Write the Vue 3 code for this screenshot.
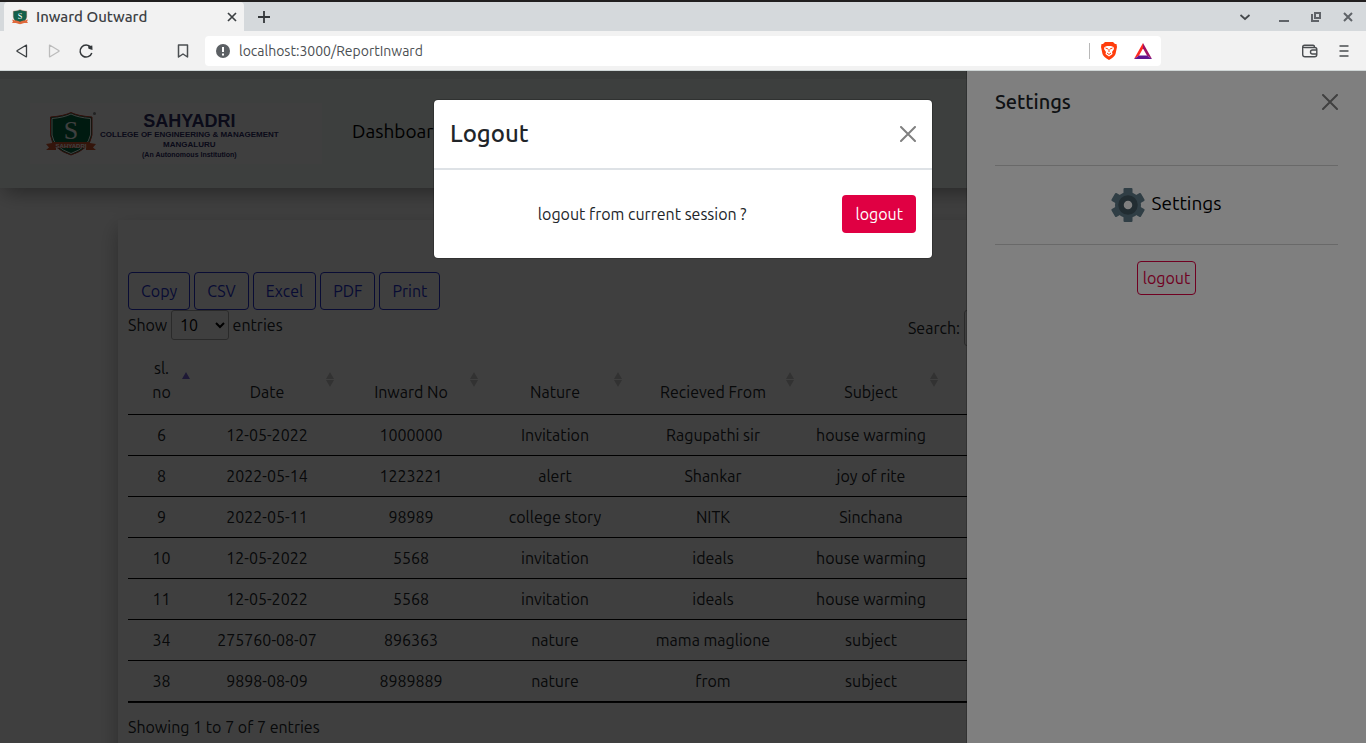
<script setup>
import { ref } from 'vue'

const exportButtons = ['Copy', 'CSV', 'Excel', 'PDF', 'Print']
const columns = ['sl. no', 'Date', 'Inward No', 'Nature', 'Recieved From', 'Subject']
const rows = [
  ['6', '12-05-2022', '1000000', 'Invitation', 'Ragupathi sir', 'house warming'],
  ['8', '2022-05-14', '1223221', 'alert', 'Shankar', 'joy of rite'],
  ['9', '2022-05-11', '98989', 'college story', 'NITK', 'Sinchana'],
  ['10', '12-05-2022', '5568', 'invitation', 'ideals', 'house warming'],
  ['11', '12-05-2022', '5568', 'invitation', 'ideals', 'house warming'],
  ['34', '275760-08-07', '896363', 'nature', 'mama maglione', 'subject'],
  ['38', '9898-08-09', '8989889', 'nature', 'from', 'subject'],
]
const pageSize = ref('10')
const search = ref('')
const address = ref('localhost:3000/ReportInward')
</script>

<template>
  <div class="window">
    <header class="chrome">
      <div class="tabstrip">
        <div class="tab">
          <svg class="favicon" width="16" height="16" viewBox="0 0 50 46">
            <path d="M4 5Q17 4 25 0Q33 4 46 5V23Q44 37 25 44Q6 37 4 23Z" fill="#14604a" stroke="#b5523a" stroke-width="1" />
            <path d="M0 31L10 34H40L50 31L47 37L50 42H38L25 46L12 42H0L3 37Z" fill="#e0693c" />
            <path d="M10 8V24Q13 35 25 38Q37 35 40 24V8L25 5Z" fill="#14604a" />
            <text x="25" y="30" text-anchor="middle" class="crest-letter">S</text>
          </svg>
          <span class="tab-title">Inward Outward</span>
          <button class="icon-btn" aria-label="Close tab">
            <svg width="10" height="10" viewBox="0 0 10 10"><path d="M1 1L9 9M9 1L1 9" stroke="#3c4043" stroke-width="1.7" /></svg>
          </button>
        </div>
        <button class="icon-btn new-tab" aria-label="New tab">
          <svg width="12" height="12" viewBox="0 0 12 12"><path d="M6 0V12M0 6H12" stroke="#33373a" stroke-width="1.8" /></svg>
        </button>
        <div class="window-controls">
          <button class="icon-btn" aria-label="Search tabs">
            <svg width="12" height="12" viewBox="0 0 12 12"><path d="M1.5 4L6 8L10.500 4" fill="none" stroke="#44484b" stroke-width="1.7" /></svg>
          </button>
          <button class="icon-btn" aria-label="Minimize">
            <svg width="12" height="12" viewBox="0 0 12 12"><path d="M1 10H11" stroke="#5f6368" stroke-width="2" /></svg>
          </button>
          <button class="icon-btn" aria-label="Restore">
            <svg width="12" height="12" viewBox="0 0 12 12"><path d="M5 2H10V7H5ZM2 3V10H9" fill="none" stroke="#5f6368" stroke-width="2" /></svg>
          </button>
          <button class="icon-btn" aria-label="Close window">
            <svg width="12" height="12" viewBox="0 0 12 12"><path d="M2 2L10 10M10 2L2 10" stroke="#5f6368" stroke-width="2" /></svg>
          </button>
        </div>
      </div>
      <div class="toolbar">
        <div class="nav-buttons">
          <button class="icon-btn" aria-label="Back">
            <svg width="16" height="16" viewBox="0 0 16 16"><path d="M12.500 2.500V13.500Q12.500 14 12 13.700L3.300 8.500Q2.500 8 3.300 7.500L12 2.300Q12.500 2 12.500 2.500Z" fill="none" stroke="#3c4043" stroke-width="1.3" /></svg>
          </button>
          <button class="icon-btn" aria-label="Forward">
            <svg width="16" height="16" viewBox="0 0 16 16"><path d="M3.500 2.500V13.500Q3.500 14 4 13.700L12.700 8.500Q13.500 8 12.700 7.500L4 2.300Q3.500 2 3.500 2.500Z" fill="none" stroke="#bcbcbc" stroke-width="1.3" /></svg>
          </button>
          <button class="icon-btn" aria-label="Reload">
            <svg width="16" height="16" viewBox="0 0 16 16"><path d="M12.800 4.300A6 6 0 1 0 13.800 10" fill="none" stroke="#33373a" stroke-width="1.500" /><path d="M10 3.200L14.300 2.500L14.500 7L10.500 5.800Z" fill="#33373a" /></svg>
          </button>
          <button class="icon-btn bookmark" aria-label="Bookmark">
            <svg width="16" height="16" viewBox="0 0 16 16"><path d="M3.500 2H12.500V14L8 11L3.500 14Z" fill="none" stroke="#4b4f52" stroke-width="1.500" stroke-linejoin="round" /></svg>
          </button>
        </div>
        <div class="address">
          <svg width="14" height="14" viewBox="0 0 14 14"><circle cx="7" cy="7" r="7" fill="#5c6064" /><path d="M7 3V8M7 9.500V11.500" stroke="#fff" stroke-width="2" /></svg>
          <input v-model="address" type="text" aria-label="Address" />
          <span class="divider"></span>
          <button class="icon-btn" aria-label="Shields">
            <svg width="18" height="20" viewBox="0 0 18 20">
              <path d="M5 1H13L15 3L16.500 3L17 6L15.500 13Q14.500 16 9 19Q3.500 16 2.500 13L1 6L1.500 3L3 3Z" fill="#ff3d0c" />
              <path d="M4.500 6L7 5H11L13.500 6L14 8L12 11L12.500 13L9 15.500L5.500 13L6 11L4 8Z" fill="#fff" />
              <path d="M5.500 7L8 8M12.500 7L10 8M9 8V11M7 12L9 13.500L11 12" fill="none" stroke="#ff3d0c" stroke-width="1" />
            </svg>
          </button>
          <button class="icon-btn rewards" aria-label="Rewards">
            <svg width="18" height="16" viewBox="0 0 18 16">
              <path d="M9 0L0 16L5 12.500L9 5.500Z" fill="#ff2a1f" />
              <path d="M9 0L18 16L13 12.500L9 5.500Z" fill="#9e1165" />
              <path d="M0 16H18L13 12.500H5Z" fill="#5f1291" />
            </svg>
          </button>
        </div>
        <div class="menu-buttons">
          <button class="icon-btn" aria-label="Wallet">
            <svg width="18" height="14" viewBox="0 0 18 14"><path d="M13.500 3.500V3Q13.500 1.200 12 1.200H3.500Q1.700 1.200 1.700 3V10.500Q1.700 12.800 4 12.800H13.500Q15.800 12.800 15.800 10.500V5.500Q15.800 3.500 13.800 3.500H3.500Q1.700 3.500 1.700 2.800M15.800 6H11.500Q9.500 6 9.500 8Q9.500 10 11.500 10H15.800" fill="none" stroke="#4a4d50" stroke-width="1.400" /></svg>
          </button>
          <button class="icon-btn" aria-label="Menu">
            <svg width="12" height="12" viewBox="0 0 12 12"><path d="M1.500 1H10.500M1.500 6H10.500M1.500 11H10.500" stroke="#4a4d50" stroke-width="1.500" /></svg>
          </button>
        </div>
      </div>
    </header>

    <main class="viewport">
      <nav class="site-nav">
        <div class="brand">
          <svg width="52" height="46" viewBox="0 0 52 46">
            <path d="M4.500 6Q18 5 25 1.500Q32 5 46 6V24Q44 38 25 44Q6 38 4.500 24Z" fill="#006b40" stroke="#c63b2c" stroke-width="1" />
            <path d="M6 7.500Q18 6.500 25 3Q32 6.500 44.500 7.500V24Q42 36.500 25 42.500Q8 36.500 6 24Z" fill="none" stroke="#fff" stroke-width="1" />
            <path d="M0 33L6 32V31H44V32L50 33L47 36.500L50 39H40V37H10V39H0L3 36.500Z" fill="#d2562f" />
            <text x="25" y="28" text-anchor="middle" class="crest-letter">S</text>
            <text x="25" y="36.500" text-anchor="middle" class="crest-name">SAHYADRI</text>
            <circle cx="48.500" cy="2.500" r="1.500" fill="#888" />
          </svg>
          <div class="brand-text">
            <strong class="brand-name">SAHYADRI</strong>
            <span>COLLEGE OF ENGINEERING &amp; MANAGEMENT</span>
            <span>MANGALURU</span>
            <span class="brand-note">(An Autonomous Institution)</span>
          </div>
        </div>
        <a class="nav-link" href="#">Dashboard</a>
      </nav>

      <section class="card">
        <div class="exports">
          <button v-for="label in exportButtons" :key="label" class="export-btn">{{ label }}</button>
        </div>
        <div class="controls">
          <label class="length">Show
            <select v-model="pageSize"><option>10</option><option>25</option></select>
            entries</label>
          <label class="filter">Search: <input v-model="search" type="search" /></label>
        </div>
        <table>
          <colgroup>
            <col class="c-id" /><col class="c-mid" /><col class="c-mid" /><col class="c-mid" /><col class="c-wide" /><col class="c-mid" /><col />
          </colgroup>
          <thead>
            <tr>
              <th v-for="(name, i) in columns" :key="name" scope="col">
                {{ name }}
                <svg class="sort" width="8" height="15" viewBox="0 0 8 15">
                  <path d="M4 0L8 7H0Z" :class="i === 0 ? 'active' : 'idle'" />
                  <path v-if="i > 0" d="M0 8H8L4 15Z" class="idle" />
                </svg>
              </th>
              <td></td>
            </tr>
          </thead>
          <tbody>
            <tr v-for="row in rows" :key="row[0]">
              <td v-for="(cell, i) in row" :key="i">{{ cell }}</td>
              <td></td>
            </tr>
          </tbody>
        </table>
        <p class="info">Showing 1 to 7 of 7 entries</p>
      </section>

      <div class="backdrop"></div>

      <aside class="offcanvas">
        <div class="offcanvas-head">
          <h5>Settings</h5>
          <button class="icon-btn" aria-label="Close settings">
            <svg width="16" height="16" viewBox="0 0 16 16"><path d="M1 1L15 15M15 1L1 15" stroke="#808080" stroke-width="2" stroke-linecap="round" /></svg>
          </button>
        </div>
        <hr />
        <a class="settings-link" href="#">
          <svg width="34" height="34" viewBox="0 0 34 34">
            <g fill="#607d8b">
              <circle cx="17" cy="17" r="13" />
              <rect x="12.500" y="0" width="9" height="34" rx="1" />
              <rect x="12.500" y="0" width="9" height="34" rx="1" transform="rotate(60 17 17)" />
              <rect x="12.500" y="0" width="9" height="34" rx="1" transform="rotate(120 17 17)" />
            </g>
            <circle cx="17" cy="17" r="7" fill="#fff" stroke="#455a64" stroke-width="5.500" />
          </svg>
          <span>Settings</span>
        </a>
        <hr />
        <button class="outline-logout">logout</button>
      </aside>

      <div class="backdrop"></div>

      <div class="modal" role="dialog" aria-labelledby="logout-title">
        <div class="modal-head">
          <h4 id="logout-title">Logout</h4>
          <button class="icon-btn" aria-label="Close dialog">
            <svg width="16" height="16" viewBox="0 0 16 16"><path d="M1 1L15 15M15 1L1 15" stroke="#808080" stroke-width="2" stroke-linecap="round" /></svg>
          </button>
        </div>
        <div class="modal-body">
          <p>logout from current session ?</p>
          <button class="solid-logout">logout</button>
        </div>
      </div>
    </main>
  </div>
</template>

<style>
body {
  margin: 0;
  overflow: hidden;
}
</style>

<style scoped>
* {
  box-sizing: border-box;
}
.window {
  display: flex;
  flex-direction: column;
  height: 100vh;
  font-family: Ubuntu, "Noto Sans", "Open Sans", sans-serif;
  font-size: 16px;
  line-height: 24px;
  color: #212529;
}
button, input, select {
  font: inherit;
}
svg {
  display: block;
  flex: none;
}
.icon-btn {
  display: flex;
  padding: 0;
  border: 0;
  background: none;
}

/* browser chrome */
.chrome {
  border-top: 2px solid #211f1f;
  border-bottom: 1px solid #cfd6d6;
  background: #f2f2f2;
}
.tabstrip {
  display: flex;
  align-items: center;
  height: 29px;
  padding-left: 4px;
  background: #d5d9dc;
}
.tab {
  display: flex;
  align-items: center;
  gap: 8px;
  width: 240px;
  height: 29px;
  padding: 0 7px 0 8px;
  border-radius: 4px 4px 0 0;
  background: #f2f2f2;
  color: #3c4043;
}
.tab-title {
  flex: 1;
  font-size: 15px;
  font-weight: 500;
}
.new-tab {
  margin-left: 14px;
}
.window-controls {
  display: flex;
  gap: 20px;
  margin-left: auto;
  padding-right: 12px;
}
.window-controls .icon-btn:first-child {
  margin-right: 7px;
}
.toolbar {
  display: flex;
  align-items: center;
  height: 39px;
}
.nav-buttons {
  display: flex;
  gap: 16px;
  width: 205px;
  padding: 0 14px;
}
.bookmark {
  margin-left: auto;
}
.address {
  display: flex;
  flex: 1;
  align-items: center;
  height: 30px;
  padding: 0 9px 0 11px;
  border-radius: 4px;
  background: #fff;
}
.address input {
  flex: 1;
  min-width: 0;
  padding: 0 9px;
  border: 0;
  outline: 0;
  background: none;
  color: #4b4f53;
  font-size: 14px;
}
.divider {
  width: 1px;
  height: 16px;
  margin-right: 10px;
  background: #b8b8b8;
}
.rewards {
  margin-left: 16px;
}
.menu-buttons {
  display: flex;
  align-items: center;
  justify-content: flex-end;
  gap: 19px;
  width: 205px;
  padding-right: 16px;
}

/* page */
.viewport {
  position: relative;
  flex: 1;
  min-height: 0;
  overflow: hidden;
  background: #fff;
}
.site-nav {
  display: flex;
  align-items: center;
  padding: 24px 30px;
  border-top: 8px solid #e4eee9;
  background: mintcream;
  box-shadow: 4px 4px 20px rgba(0, 0, 0, 0.4);
}
.brand {
  display: flex;
  align-items: center;
  gap: 2px;
  width: 292px;
  height: 61px;
  padding-left: 16px;
  background: #fff;
}
.brand-text {
  display: flex;
  flex-direction: column;
  align-items: center;
  padding-top: 4px;
  color: #2c2c66;
  font-family: "Liberation Sans", Arial, sans-serif;
  font-size: 8px;
  font-weight: 700;
  line-height: 10px;
  white-space: nowrap;
}
.brand-name {
  font-size: 18px;
  line-height: 18px;
}
.brand-note {
  font-size: 7px;
}
.crest-letter {
  fill: #fff;
  font-family: "Liberation Serif", serif;
  font-size: 26px;
}
.crest-name {
  fill: #fff;
  font-family: "Liberation Sans", sans-serif;
  font-size: 6px;
  font-weight: 700;
}
.nav-link {
  margin: 0 0 6px 30px;
  color: #000;
  font-size: 19px;
  text-decoration: none;
}
.card {
  margin: 32px 118px 0;
  padding: 52px 10px 24px;
  background: #fff;
  box-shadow: 0 8px 20px rgba(0, 0, 0, 0.3);
}
.exports {
  display: flex;
  gap: 4px;
}
.export-btn {
  padding: 6px 12px;
  border: 1px solid #2431d0;
  border-radius: 4px;
  background: none;
  color: #2431d0;
}
.controls {
  display: flex;
  justify-content: space-between;
  height: 36px;
}
.length select {
  width: 58px;
  height: 30px;
  padding: 0 4px;
  border: 1px solid #aaa;
  border-radius: 3px;
  background: transparent;
}
.filter {
  display: flex;
  gap: 4px;
  align-items: center;
}
.filter input {
  width: 274px;
  height: 36px;
  border: 1px solid #aaa;
  border-radius: 3px;
}
table {
  width: 100%;
  table-layout: fixed;
  border-collapse: separate;
  border-spacing: 0;
  border-bottom: 1px solid #111;
}
.c-id {
  width: 67px;
}
.c-mid {
  width: 144px;
}
.c-wide {
  width: 172px;
}
th, td {
  padding: 8px 10px;
  border-bottom: 1px solid #000;
  font-weight: 400;
  text-align: center;
}
thead th {
  position: relative;
  padding: 10px 18px;
  vertical-align: bottom;
}
.sort {
  position: absolute;
  top: 26px;
  right: 5px;
}
.idle {
  fill: #c8c8c8;
}
.active {
  fill: #7a66d8;
}
.info {
  margin: 12px 0 0;
}
.backdrop {
  position: absolute;
  inset: 0;
  background: rgba(0, 0, 0, 0.5);
}

/* settings drawer */
.offcanvas {
  position: absolute;
  top: 0;
  right: 0;
  bottom: 0;
  width: 400px;
  padding: 16px 28px;
  border-left: 1px solid rgba(0, 0, 0, 0.2);
  background: #fff;
  background-clip: padding-box;
  text-align: center;
}
.offcanvas-head {
  display: flex;
  align-items: center;
  justify-content: space-between;
  height: 30px;
  margin-bottom: 48px;
}
h5, h4 {
  margin: 0;
  font-weight: 500;
}
h5 {
  font-size: 20px;
}
hr {
  height: 1px;
  margin: 0;
  border: 0;
  background: #d3d3d3;
}
.settings-link {
  display: flex;
  align-items: center;
  justify-content: center;
  gap: 6px;
  height: 78px;
  color: #000;
  font-size: 19px;
  text-decoration: none;
}
.settings-link span {
  padding-bottom: 4px;
}
.outline-logout {
  margin-top: 16px;
  padding: 4px 5px;
  border: 1px solid #e00043;
  border-radius: 4px;
  background: none;
  color: #e00043;
}

/* logout dialog */
.modal {
  position: absolute;
  top: 28px;
  left: 50%;
  width: 500px;
  margin-left: -250px;
  border: 1px solid rgba(0, 0, 0, 0.2);
  border-radius: 5px;
  background: #fff;
  background-clip: padding-box;
}
.modal-head {
  display: flex;
  align-items: center;
  justify-content: space-between;
  height: 70px;
  padding: 0 16px;
  border-bottom: 2px solid #dee2e6;
}
h4 {
  font-size: 24px;
}
.modal-body {
  display: flex;
  align-items: center;
  height: 88px;
  padding: 0 16px;
}
.modal-body p {
  flex: 1;
  margin: 0;
  padding-right: 8px;
  text-align: center;
}
.solid-logout {
  padding: 7px 13px;
  border: 0;
  border-radius: 4px;
  background: #e00043;
  color: #fff;
}
</style>
